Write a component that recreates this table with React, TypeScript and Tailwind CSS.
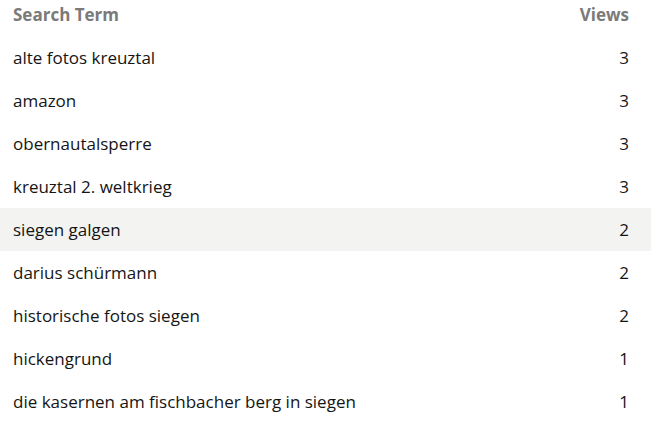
const rows: [string, number][] = [
  ['alte fotos kreuztal', 3],
  ['amazon', 3],
  ['obernautalsperre', 3],
  ['kreuztal 2. weltkrieg', 3],
  ['siegen galgen', 2],
  ['darius schürmann', 2],
  ['historische fotos siegen', 2],
  ['hickengrund', 1],
  ['die kasernen am fischbacher berg in siegen', 1],
]

export default function App() {
  return (
    <div className="w-[651px] h-[425px] bg-white overflow-hidden font-['Open_Sans',sans-serif]">
      <div className="flex items-center justify-between h-[29px] pl-[13px] pr-[22px] text-[17px] font-bold text-[#7a7a7a]">
        <span>Search Term</span>
        <span>Views</span>
      </div>
      <div className="mt-[7px]">
        {rows.map(([term, views], i) => (
          <div
            key={term}
            className={`flex items-center justify-between h-[43px] pl-[13px] pr-[22px] text-[17px] text-[#151515] ${
              i === 4 ? 'bg-[#f3f3f2]' : ''
            }`}
          >
            <span>{term}</span>
            <span>{views}</span>
          </div>
        ))}
      </div>
    </div>
  )
}
